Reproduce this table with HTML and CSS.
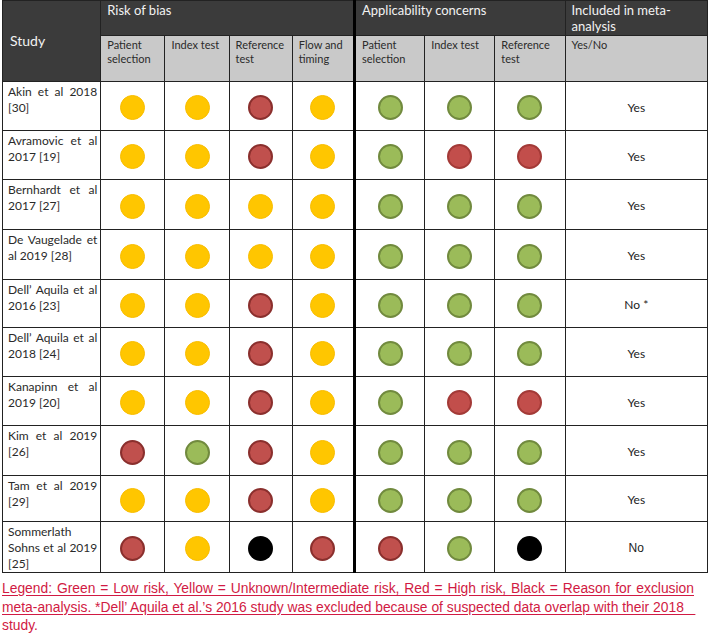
FILE: index.html
```html
<!DOCTYPE html>
<html>
<head>
<meta charset="utf-8">
<link rel="stylesheet" href="styles.css">
</head>
<body>
<table class="quadas">
  <colgroup>
    <col class="c-study">
    <col class="c64"><col class="c64"><col class="c63"><col class="c62">
    <col class="c70"><col class="c70"><col class="c70">
    <col class="c-inc">
  </colgroup>
  <thead>
    <tr class="top">
      <th rowspan="2" class="study-h">Study</th>
      <th colspan="4" class="grp sep">Risk of bias</th>
      <th colspan="3" class="grp">Applicability concerns</th>
      <th class="grp">Included in meta-analysis</th>
    </tr>
    <tr class="sub">
      <th>Patient selection</th>
      <th>Index test</th>
      <th>Reference test</th>
      <th class="sep">Flow and timing</th>
      <th>Patient selection</th>
      <th>Index test</th>
      <th>Reference test</th>
      <th>Yes/No</th>
    </tr>
  </thead>
  <tbody>
    <tr class="r49">
      <td class="name">Akin et al 2018 [30]</td>
      <td><span class="dot y"></span></td><td><span class="dot y"></span></td><td><span class="dot r"></span></td><td class="sep"><span class="dot y"></span></td>
      <td><span class="dot g"></span></td><td><span class="dot g"></span></td><td><span class="dot g"></span></td>
      <td class="yn">Yes</td>
    </tr>
    <tr class="r49">
      <td class="name">Avramovic et al 2017 [19]</td>
      <td><span class="dot y"></span></td><td><span class="dot y"></span></td><td><span class="dot r"></span></td><td class="sep"><span class="dot y"></span></td>
      <td><span class="dot g"></span></td><td><span class="dot r2"></span></td><td><span class="dot r2"></span></td>
      <td class="yn">Yes</td>
    </tr>
    <tr class="r50">
      <td class="name">Bernhardt et al 2017 [27]</td>
      <td><span class="dot y"></span></td><td><span class="dot y"></span></td><td><span class="dot y"></span></td><td class="sep"><span class="dot y"></span></td>
      <td><span class="dot g"></span></td><td><span class="dot g"></span></td><td><span class="dot g"></span></td>
      <td class="yn">Yes</td>
    </tr>
    <tr class="r50">
      <td class="name">De Vaugelade et al 2019 [28]</td>
      <td><span class="dot y"></span></td><td><span class="dot y"></span></td><td><span class="dot y"></span></td><td class="sep"><span class="dot y"></span></td>
      <td><span class="dot g"></span></td><td><span class="dot g"></span></td><td><span class="dot g"></span></td>
      <td class="yn">Yes</td>
    </tr>
    <tr class="r48">
      <td class="name">Dell’ Aquila et al 2016 [23]</td>
      <td><span class="dot y"></span></td><td><span class="dot y"></span></td><td><span class="dot r"></span></td><td class="sep"><span class="dot y"></span></td>
      <td><span class="dot g"></span></td><td><span class="dot g"></span></td><td><span class="dot g"></span></td>
      <td class="yn">No *</td>
    </tr>
    <tr class="r49">
      <td class="name">Dell’ Aquila et al 2018 [24]</td>
      <td><span class="dot y"></span></td><td><span class="dot y"></span></td><td><span class="dot r"></span></td><td class="sep"><span class="dot y"></span></td>
      <td><span class="dot g"></span></td><td><span class="dot g"></span></td><td><span class="dot g"></span></td>
      <td class="yn">Yes</td>
    </tr>
    <tr class="r49">
      <td class="name">Kanapinn et al 2019 [20]</td>
      <td><span class="dot y"></span></td><td><span class="dot y"></span></td><td><span class="dot r"></span></td><td class="sep"><span class="dot y"></span></td>
      <td><span class="dot g"></span></td><td><span class="dot r2"></span></td><td><span class="dot r2"></span></td>
      <td class="yn">Yes</td>
    </tr>
    <tr class="r50">
      <td class="name">Kim et al 2019 [26]</td>
      <td><span class="dot r"></span></td><td><span class="dot g"></span></td><td><span class="dot r"></span></td><td class="sep"><span class="dot y"></span></td>
      <td><span class="dot g"></span></td><td><span class="dot g"></span></td><td><span class="dot g"></span></td>
      <td class="yn">Yes</td>
    </tr>
    <tr class="r46">
      <td class="name">Tam et al 2019 [29]</td>
      <td><span class="dot y"></span></td><td><span class="dot y"></span></td><td><span class="dot r"></span></td><td class="sep"><span class="dot y"></span></td>
      <td><span class="dot g"></span></td><td><span class="dot g"></span></td><td><span class="dot g"></span></td>
      <td class="yn">Yes</td>
    </tr>
    <tr class="r50">
      <td class="name">Sommerlath Sohns et al 2019 [25]</td>
      <td><span class="dot r"></span></td><td><span class="dot y"></span></td><td><span class="dot k"></span></td><td class="sep"><span class="dot r"></span></td>
      <td><span class="dot r"></span></td><td><span class="dot g"></span></td><td><span class="dot k"></span></td>
      <td class="yn no">No</td>
    </tr>
  </tbody>
</table>
<div class="legend">
  <div class="line just"><u>Legend: Green = Low risk, Yellow = Unknown/Intermediate risk, Red = High risk, Black = Reason for exclusion</u></div>
  <div class="line"><u>meta-analysis. *Dell’ Aquila et al.’s 2016 study was excluded because of suspected data overlap with their 2018&nbsp;&nbsp;&nbsp;</u></div>
  <div class="line">study.</div>
</div>
</body>
</html>
```
FILE: styles.css
```css
html, body {
  margin: 0;
  padding: 0;
  background: #ffffff;
}

body {
  padding: 0 0 0 2px;
  font-family: Lato, "Open Sans", sans-serif;
}

.quadas {
  border-collapse: collapse;
  table-layout: fixed;
  width: 706px;
  color: #262626;
}

.c-study { width: 98px; }
.c64 { width: 64px; }
.c63 { width: 63px; }
.c62 { width: 62px; }
.c70 { width: 70px; }
.c-inc { width: 142px; }

.quadas th,
.quadas td {
  border: 1px solid #222222;
  padding: 0;
}

.quadas .sep {
  border-right: 3px solid #000000;
}

.top {
  height: 35px;
}

.top th {
  background: #3b3b3b;
  color: #f2f2f2;
  font-weight: normal;
  font-size: 13px;
  line-height: 16px;
  text-align: left;
  vertical-align: top;
  padding: 1px 6px 0 6px;
}

.top th.study-h {
  vertical-align: middle;
  padding: 0 7px;
  font-size: 14px;
}

.sub {
  height: 46px;
}

.sub th {
  background: #c9c9c9;
  color: #2b2b2b;
  font-weight: normal;
  font-size: 11px;
  line-height: 14px;
  text-align: left;
  vertical-align: top;
  padding: 2px 4px 0 6px;
}

.r46 { height: 46px; }
.r48 { height: 48px; }
.r49 { height: 49px; }
.r50 { height: 50px; }

.quadas td {
  text-align: center;
  vertical-align: middle;
}

.quadas td.name {
  text-align: justify;
  text-align-last: left;
  vertical-align: top;
  font-size: 12px;
  line-height: 16px;
  padding: 2px 3px 0 5px;
  color: #2a2a2a;
}

.dot {
  display: inline-block;
  width: 25px;
  height: 25px;
  border-radius: 50%;
  box-sizing: border-box;
  vertical-align: middle;
  margin-top: 3px;
}

.dot.y { background: #ffc600; border: 1px solid #f9bd00; }
.dot.r { background: #c0504d; border: 2px solid #8a2f2d; }
.dot.r2 { background: #c24e4b; border: 2px solid #a33a37; }
.dot.g { background: #9bbb59; border: 2px solid #718a3e; }
.dot.k { background: #000000; }

.quadas td.yn {
  font-size: 12px;
  color: #222222;
  padding-top: 2px;
}

.quadas td.yn.no {
  font-family: "Liberation Sans", Arial, sans-serif;
  font-size: 12px;
}

.legend {
  width: 692px;
  margin-top: 6px;
  font-family: "Liberation Sans", Arial, sans-serif;
  font-size: 13.85px;
  line-height: 18.5px;
  color: #d11a43;
}

.legend .line {
  white-space: nowrap;
}

.legend .line.just {
  text-align: justify;
  text-align-last: justify;
  white-space: normal;
}

.legend u {
  text-decoration: underline;
  text-underline-offset: 2px;
}
```
